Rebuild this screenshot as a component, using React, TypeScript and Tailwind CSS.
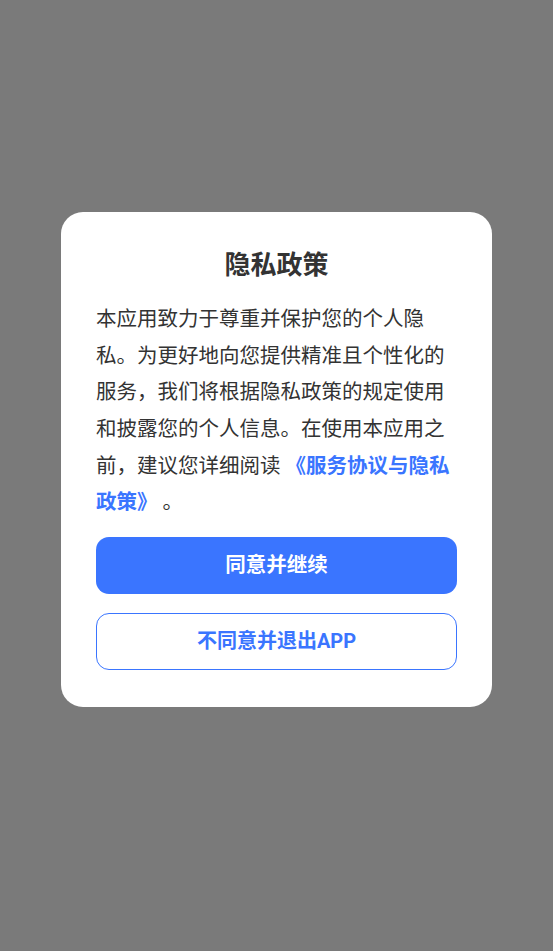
export default function App() {
  return (
    <div
      className="flex min-h-dvh items-center justify-center bg-[#7a7a7a] pb-[32px]"
      style={{ fontFamily: 'Roboto, "Noto Sans CJK SC", "Noto Sans", sans-serif' }}
    >
      <div className="w-[431px] rounded-[22px] bg-white px-[35px] pt-[35px] pb-[37px]">
        <h2 className="text-center text-[26px] leading-[36px] font-bold text-[#333333]">
          隐私政策
        </h2>
        <p className="mt-[18px] text-[20.5px] leading-[36.6px] text-[#333333]">
          本应用致力于尊重并保护您的个人隐私。为更好地向您提供精准且个性化的服务，我们将根据隐私政策的规定使用和披露您的个人信息。在使用本应用之前，建议您详细阅读{' '}
          <span className="font-bold text-[#3a75ff]">《服务协议与隐私政策》</span> 。
        </p>
        <div className="mt-[16px] flex flex-col gap-[19px]">
          <button
            type="button"
            className="h-[57px] w-full rounded-[13px] bg-[#3a75ff] text-[20.5px] font-bold text-white"
          >
            同意并继续
          </button>
          <button
            type="button"
            className="h-[57px] w-full rounded-[13px] border-[1.5px] border-[#3a75ff] bg-white text-[20px] font-bold text-[#3a75ff]"
          >
            不同意并退出APP
          </button>
        </div>
      </div>
    </div>
  );
}
